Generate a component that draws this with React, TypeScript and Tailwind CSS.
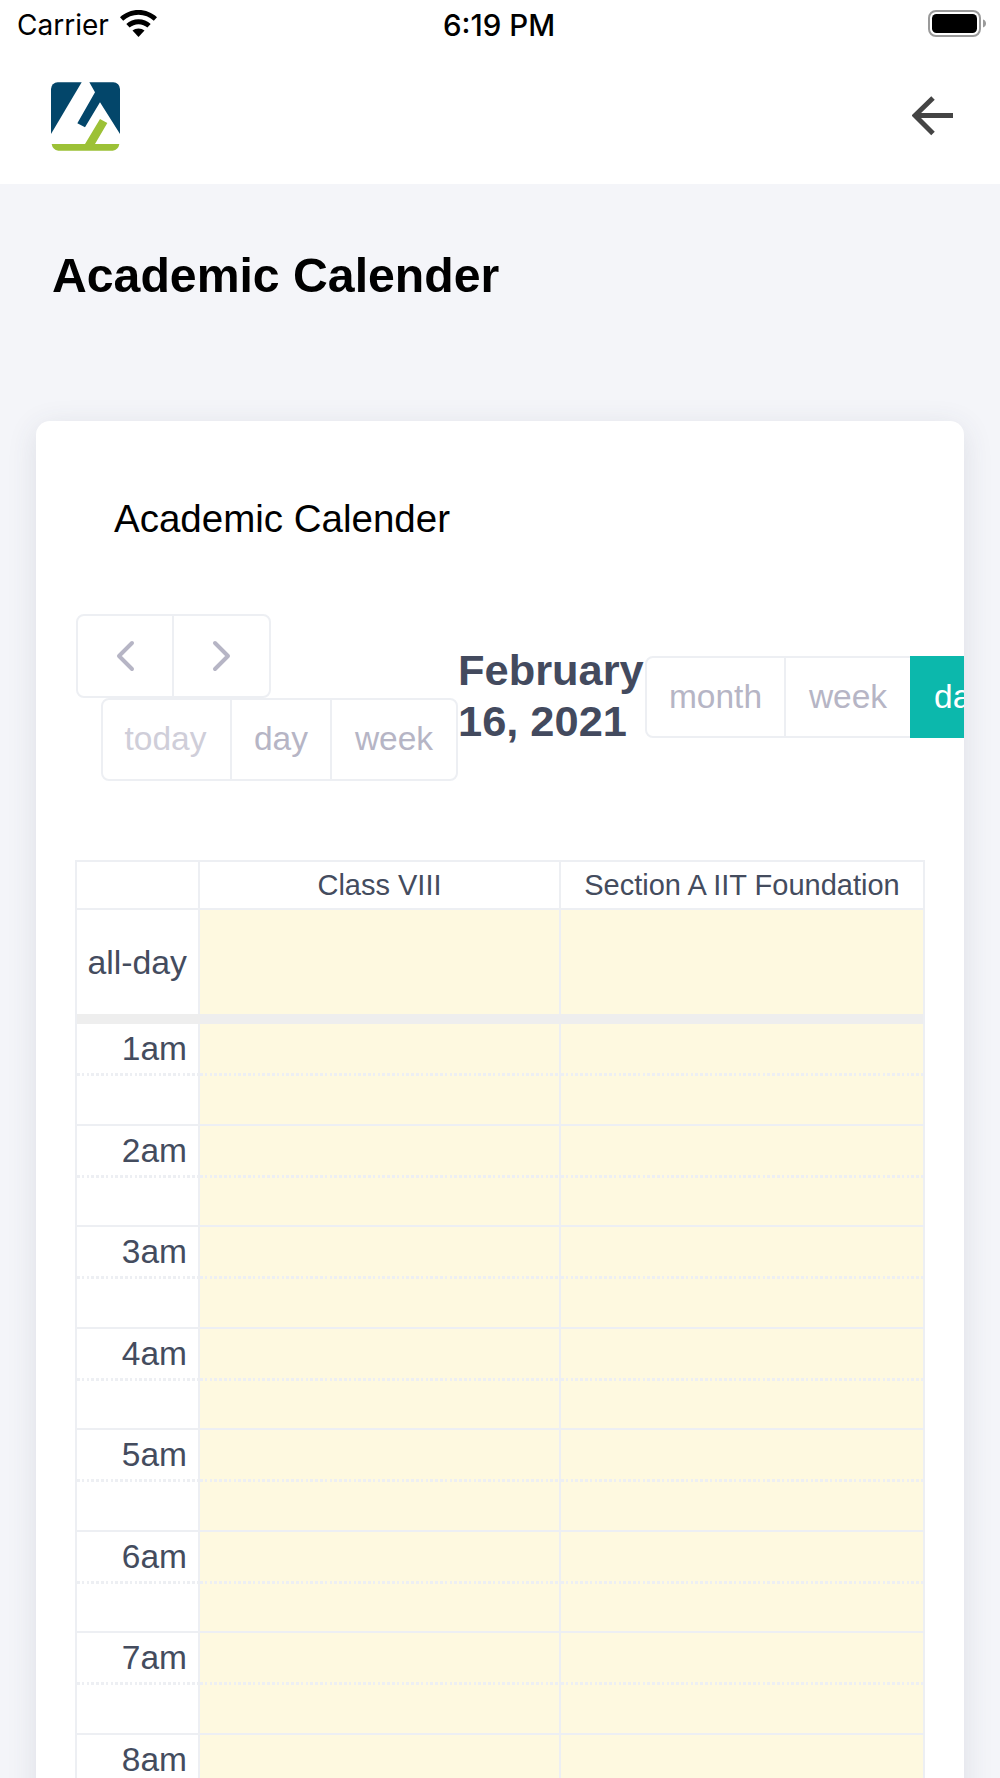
import React from "react";

const hours = ["1am", "2am", "3am", "4am", "5am", "6am", "7am", "8am"];
const gridCols = "grid grid-cols-[121px_2px_359px_2px_362px]";
const dots =
  "h-[3px] bg-[repeating-linear-gradient(90deg,#edeff3_0px,#edeff3_2.6px,transparent_2.6px,transparent_4.8px)]";

function Logo() {
  return (
    <svg width="69" height="69" viewBox="153 245 207 205" className="block">
      <path d="M153 400V265a20 20 0 0 1 20-20h72Z" fill="#03466a" />
      <path d="M268 245l17 30-53 93 23 12 45-75 60 95V265a20 20 0 0 0-20-20Z" fill="#03466a" />
      <path d="M155 430h100l45-75 22 12-37 63h73a24 24 0 0 1-20 20H175a24 24 0 0 1-20-20Z" fill="#9cc136" />
    </svg>
  );
}

function Wifi() {
  return (
    <svg width="37" height="27" viewBox="0 0 37 27" className="mb-[3px] block">
      <path d="M18.5 0C11.4 0 5 2.7 0 7.2l3.2 3.5C7.3 7 12.6 4.8 18.5 4.8S29.7 7 33.8 10.7L37 7.2C32 2.7 25.6 0 18.5 0Z" fill="#000" />
      <path d="M18.5 9.3c-4.7 0-9 1.8-12.2 4.7l3.3 3.6c2.4-2.1 5.5-3.4 8.9-3.4s6.5 1.3 8.9 3.4l3.3-3.6c-3.2-2.9-7.5-4.7-12.2-4.7Z" fill="#000" />
      <path d="M18.5 18.4c-2.3 0-4.4.8-6 2.2l6 6.4 6-6.4c-1.6-1.4-3.7-2.2-6-2.2Z" fill="#000" />
    </svg>
  );
}

function Battery() {
  return (
    <svg width="59" height="27" viewBox="0 0 59 27" className="mb-[3px] block">
      <rect x="1" y="1" width="51" height="25" rx="7" fill="none" stroke="#9a9a9a" strokeWidth="2" />
      <rect x="4" y="4" width="45" height="19" rx="4.5" fill="#000" />
      <path d="M55 9.5c2 .6 3 2.2 3 4s-1 3.4-3 4Z" fill="#9a9a9a" />
    </svg>
  );
}

function Chevron({ d }: { d: string }) {
  return (
    <svg width="20" height="32" viewBox="0 0 20 32" className="block">
      <path d={d} fill="none" stroke="#b6b5c5" strokeWidth="4" strokeLinecap="round" strokeLinejoin="round" />
    </svg>
  );
}

function Slot() {
  return (
    <div className="h-full bg-[#fef9e0]">
      <div className="h-[49px]" />
      <div className={dots} />
    </div>
  );
}

function Row({ label }: { label: string }) {
  return (
    <div className={gridCols + " h-[101.5px] border-b-2 border-[#edeff3]"}>
      <div className="h-full">
        <div className="h-[49px] pr-[11px] pt-[7px] text-right text-[33.5px] leading-[36px] text-[#444c5e]">{label}</div>
        <div className={dots} />
      </div>
      <div className="bg-[#edeff3]" />
      <Slot />
      <div className="bg-[#edeff3]" />
      <Slot />
    </div>
  );
}

export default function App() {
  return (
    <div className="h-[1778px] w-[1000px] overflow-hidden bg-[#f4f5f9] font-['Liberation_Sans',sans-serif]">
      <header className="h-[184px] bg-white">
        <div className="relative flex h-[50px] items-center justify-between pl-[17px] pr-[13px]">
          <div className="flex items-center gap-[11px]">
            <span className="font-['Inter',sans-serif] text-[28px] leading-[50px] text-black">Carrier</span>
            <Wifi />
          </div>
          <span className="absolute left-[443px] top-0 font-['Inter',sans-serif] text-[29.5px] font-medium leading-[50px] text-black">
            6:19 PM
          </span>
          <Battery />
        </div>
        <div className="flex items-start justify-between pl-[51px] pr-[47px] pt-[32px]">
          <Logo />
          <svg width="41" height="40" viewBox="0 0 41 40" className="mt-[14px] block">
            <path d="M41 19.5H4M21 2 3 19.5 21 37.5" fill="none" stroke="#444444" strokeWidth="5" />
          </svg>
        </div>
      </header>

      <main className="px-[36px]">
        <h1 className="pl-[16px] pt-[64px] text-[48.2px] font-bold leading-[55px] text-black">Academic Calender</h1>

        <section className="mt-[118px] h-[1400px] overflow-hidden rounded-[14px] bg-white pl-[40px] shadow-[0_6px_30px_rgba(60,65,90,0.12)]">
          <h2 className="pl-[38px] pt-[76px] text-[38.5px] leading-[44px] text-black">Academic Calender</h2>

          <div className="mt-[73px] flex w-[960px] items-center">
            <div className="flex w-[382px] shrink-0 flex-col items-start">
              <div className="flex h-[84px] w-[195px] rounded-[8px] border-2 border-[#edeff3]">
                <div className="flex w-[96px] items-center justify-center border-r-2 border-[#edeff3]">
                  <Chevron d="M17 3 4 16l13 13" />
                </div>
                <div className="flex flex-1 items-center justify-center">
                  <Chevron d="M3 3l13 13L3 29" />
                </div>
              </div>
              <div className="ml-[25px] flex h-[83px] w-[357px] rounded-[8px] border-2 border-[#edeff3] text-[33.5px] text-[#b6b5c5]">
                <div className="flex w-[129px] items-center justify-center border-r-2 border-[#edeff3] pr-[2px] text-[#cfced9]">today</div>
                <div className="flex w-[100px] items-center justify-center border-r-2 border-[#edeff3]">day</div>
                <div className="flex flex-1 items-center justify-center">week</div>
              </div>
            </div>

            <h3 className="mb-[4px] w-[187px] shrink-0 text-[43.4px] font-bold leading-[51px] text-[#434a5e]">February 16, 2021</h3>

            <div className="-mt-[1px] flex h-[82px] w-[400px] shrink-0 rounded-l-[8px] text-[33.5px] text-[#b6b5c5]">
              <div className="flex w-[141px] items-center justify-center rounded-l-[8px] border-y-2 border-l-2 border-r-2 border-[#edeff3]">month</div>
              <div className="flex w-[124px] items-center justify-center border-y-2 border-[#edeff3]">week</div>
              <div className="w-[135px] bg-[#0cb8ac] pl-[24px] leading-[82px] text-white">day</div>
            </div>
          </div>

          <div className="-ml-px mt-[79px] w-[850px] border-2 border-[#edeff3] border-b-0">
            <div className={gridCols + " h-[48px] border-b-2 border-[#edeff3] text-center text-[29px] leading-[46px] text-[#444c5e]"}>
              <div />
              <div className="bg-[#edeff3]" />
              <div>Class VIII</div>
              <div className="bg-[#edeff3]" />
              <div>Section A IIT Foundation</div>
            </div>
            <div className={gridCols + " h-[104px]"}>
              <div className="pr-[11px] text-right text-[33.8px] leading-[104px] text-[#444c5e]">all-day</div>
              <div className="bg-[#edeff3]" />
              <div className="bg-[#fef9e0]" />
              <div className="bg-[#edeff3]" />
              <div className="bg-[#fef9e0]" />
            </div>
            <div className="h-[10px] bg-[#eeeeee]" />
            {hours.map((h) => (
              <Row key={h} label={h} />
            ))}
          </div>
        </section>
      </main>
    </div>
  );
}
